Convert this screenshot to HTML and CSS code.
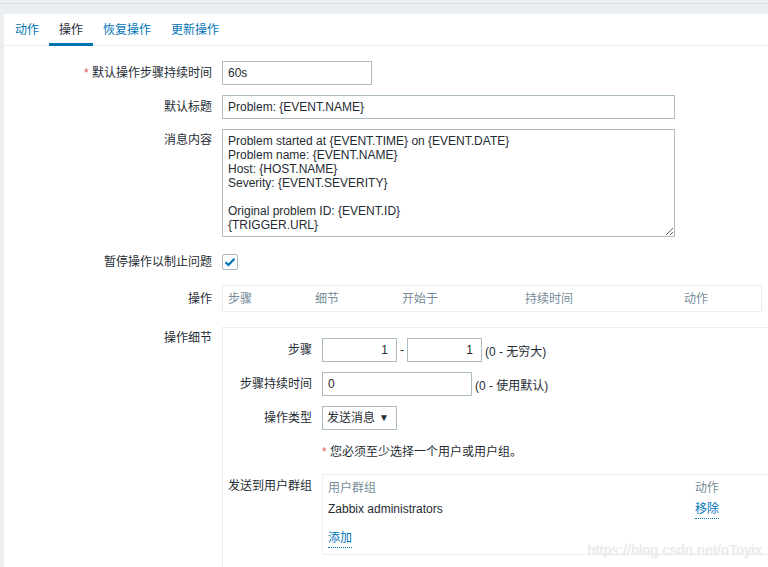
FILE: index.html
```html
<!DOCTYPE html>
<html lang="zh-CN">
<head>
<meta charset="utf-8">
<title>操作</title>
<link rel="stylesheet" href="styles.css">
</head>
<body>
<div class="topbar"></div>
<div class="panel">
  <nav class="tabs">
    <a class="tab">动作</a>
    <a class="tab active">操作</a>
    <a class="tab">恢复操作</a>
    <a class="tab">更新操作</a>
  </nav>
  <div class="form">
    <div class="row r1">
      <label class="lbl"><span class="req">*</span> 默认操作步骤持续时间</label>
      <div class="field"><div class="input w150">60s</div></div>
    </div>
    <div class="row r2">
      <label class="lbl">默认标题</label>
      <div class="field"><div class="input w453">Problem: {EVENT.NAME}</div></div>
    </div>
    <div class="row r3 top">
      <label class="lbl lbl-top">消息内容</label>
      <div class="field"><textarea class="textarea" rows="7">Problem started at {EVENT.TIME} on {EVENT.DATE}
Problem name: {EVENT.NAME}
Host: {HOST.NAME}
Severity: {EVENT.SEVERITY}

Original problem ID: {EVENT.ID}
{TRIGGER.URL}</textarea></div>
    </div>
    <div class="row r4">
      <label class="lbl">暂停操作以制止问题</label>
      <div class="field">
        <span class="checkbox"><svg width="12" height="10" viewBox="0 0 12 10"><path d="M1.5 5.2 L4.4 8 L10.5 1.8" fill="none" stroke="#0275b8" stroke-width="2.2"/></svg></span>
      </div>
    </div>
    <div class="row r5">
      <label class="lbl">操作</label>
      <div class="field">
        <div class="optable">
          <span class="c1">步骤</span><span class="c2">细节</span><span class="c3">开始于</span><span class="c4">持续时间</span><span class="c5">动作</span>
        </div>
      </div>
    </div>
    <div class="row r6 top">
      <label class="lbl lbl-top">操作细节</label>
      <div class="field">
        <div class="details">
          <div class="drow">
            <label class="dlbl">步骤</label>
            <div class="dfield">
              <div class="input w75 num">1</div><span class="dash">-</span><div class="input w75 num">1</div><span class="hint">(0 - 无穷大)</span>
            </div>
          </div>
          <div class="drow">
            <label class="dlbl">步骤持续时间</label>
            <div class="dfield"><div class="input w150">0</div><span class="hint">(0 - 使用默认)</span></div>
          </div>
          <div class="drow">
            <label class="dlbl">操作类型</label>
            <div class="dfield"><div class="select">发送消息<span class="arrow">▼</span></div></div>
          </div>
          <div class="drow note">
            <label class="dlbl"></label>
            <div class="dfield"><span class="req">*</span>&nbsp;您必须至少选择一个用户或用户组。</div>
          </div>
          <div class="drow top">
            <label class="dlbl dlbl-top">发送到用户群组</label>
            <div class="dfield">
              <div class="groups">
                <div class="grow ghead"><span class="gname">用户群组</span><span class="gact">动作</span></div>
                <div class="grow gdata"><span class="gname">Zabbix administrators</span><a class="gact link">移除</a></div>
                <div class="grow gadd"><a class="link">添加</a></div>
              </div>
            </div>
          </div>
        </div>
      </div>
    </div>
  </div>
</div>
<div class="watermark">https://blog.csdn.net/oToyix</div>
</body>
</html>
```
FILE: styles.css
```css
* { box-sizing: border-box; }
html, body { margin: 0; padding: 0; }
body {
  width: 768px;
  height: 567px;
  overflow: hidden;
  background: #ebeef0;
  font-family: "Liberation Sans", Arial, "Noto Sans CJK SC", sans-serif;
  font-size: 12px;
  color: #1f2c33;
  position: relative;
}
.topbar {
  margin-top: 3px;
  height: 11px;
  border-top: 1px solid #dde2e5;
}
.panel {
  margin-left: 4px;
  background: #fff;
  height: 553px;
  overflow: hidden;
}
.tabs {
  display: flex;
  align-items: flex-start;
  height: 32px;
  padding-left: 1px;
  border-bottom: 1px solid #ebeef0;
}
.tab {
  display: block;
  height: 32px;
  line-height: 29px;
  padding: 2px 10px 0;
  color: #0275b8;
  border-bottom: 3px solid transparent;
  cursor: pointer;
  white-space: nowrap;
}
.tab.active {
  color: #1f2c33;
  border-bottom-color: #0275b8;
}
.form {
  padding-top: 15px;
  display: flex;
  flex-direction: column;
}
.row {
  display: grid;
  grid-template-columns: 208px 1fr;
  column-gap: 10px;
  align-items: center;
}
.row.top { align-items: start; }
.r2, .r3 { margin-top: 10px; }
.r4 { margin-top: 13px; }
.r5 { margin-top: 11px; }
.r6 { margin-top: 15px; }
.lbl {
  text-align: right;
  line-height: 16px;
  white-space: nowrap;
}
.lbl-top { padding-top: 3px; }
.req { color: #e45959; }
.field { display: flex; align-items: center; min-width: 0; }
.input {
  height: 24px;
  line-height: 22px;
  border: 1px solid #acbbc2;
  padding: 0 5px;
  background: #fff;
  white-space: nowrap;
}
.w150 { width: 150px; }
.w453 { width: 453px; }
.w75 { width: 75px; }
.num { text-align: right; padding-right: 8px; }
.textarea {
  display: block;
  width: 453px;
  height: 108px;
  border: 1px solid #acbbc2;
  padding: 4px 5px;
  font-family: "Liberation Sans", Arial, "Noto Sans CJK SC", sans-serif;
  font-size: 12px;
  line-height: 14px;
  color: #1f2c33;
  resize: both;
  overflow: hidden;
  margin: 0;
}
.row.r4 .field { height: 24px; }
.checkbox {
  width: 16px;
  height: 16px;
  border: 1px solid #acbbc2;
  border-radius: 2px;
  display: flex;
  align-items: center;
  justify-content: center;
}
.optable {
  width: 540px;
  height: 27px;
  border: 1px solid #ebeef0;
  display: flex;
  align-items: center;
  padding-left: 5px;
  color: #768d99;
  line-height: 16px;
}
.optable span { white-space: nowrap; }
.c1 { width: 87px; }
.c2 { width: 87px; }
.c3 { width: 123px; }
.c4 { width: 159px; }
.details {
  flex: 1;
  border: 1px solid #ebeef0;
  border-right: none;
  border-bottom: none;
  padding-top: 10px;
  height: 260px;
  display: flex;
  flex-direction: column;
  gap: 10px;
}
.drow {
  display: grid;
  grid-template-columns: 89px 1fr;
  column-gap: 10px;
  align-items: center;
  min-height: 24px;
}
.drow.top { align-items: start; }
.dlbl { text-align: right; white-space: nowrap; line-height: 16px; }
.dlbl-top { padding-top: 4px; }
.dfield { display: flex; align-items: center; white-space: nowrap; }
.note .dfield { line-height: 24px; }
.dash { width: 10px; text-align: center; }
.hint { margin-left: 3px; }
.select {
  width: 75px;
  height: 24px;
  line-height: 22px;
  border: 1px solid #acbbc2;
  padding: 0 5px 0 4px;
  display: flex;
  justify-content: space-between;
  align-items: center;
}
.arrow { font-size: 10px; line-height: 10px; color: #1f2c33; margin-right: 2px; }
.groups {
  flex: 1;
  height: 81px;
  border: 1px solid #ebeef0;
  border-right: none;
  padding: 5px 5px 10px 5px;
}
.grow {
  display: flex;
  line-height: 16px;
  height: 16px;
}
.gname { width: 367px; }
.ghead { color: #768d99; }
.gdata { margin-top: 5px; }
.gadd { margin-top: 13px; }
.link {
  color: #0275b8;
  border-bottom: 1px dotted #0275b8;
  line-height: 16px;
  height: 18px;
  cursor: pointer;
}
.watermark {
  position: absolute;
  right: 6px;
  bottom: 9px;
  font-size: 14px;
  color: #ececec;
  text-shadow: 0 0 1px rgba(150,150,150,0.3);
  letter-spacing: 0.2px;
}
```
